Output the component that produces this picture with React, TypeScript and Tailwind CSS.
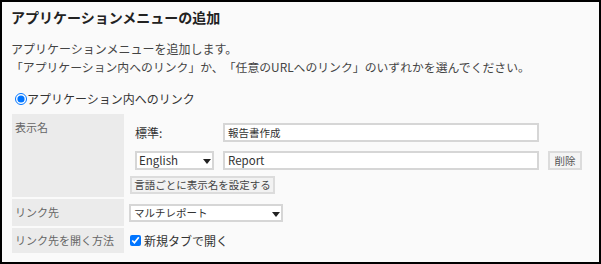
import React from "react";

const font = { fontFamily: '"Noto Sans CJK JP", "Noto Sans", sans-serif' };

function Arrow() {
  return (
    <svg width="8" height="5" viewBox="0 0 8 5" className="absolute">
      <path d="M0 0 H8 L4 5 Z" fill="#222" />
    </svg>
  );
}

export default function App() {
  return (
    <div
      className="w-[601px] h-[264px] box-border border-2 border-black bg-[#fafafa] pl-[9px] pt-[5px] text-[#333] [text-spacing-trim:space-all]"
      style={font}
    >
      <div className="text-[14px] font-bold leading-[20px] text-[#222]">アプリケーションメニューの追加</div>
      <div className="mt-[13px] text-[12px] leading-[18px] text-[#444]">
        <div>アプリケーションメニューを追加します。</div>
        <div className="text-[11.85px]">「アプリケーション内へのリンク」か、「任意のURLへのリンク」のいずれかを選んでください。</div>
      </div>
      <div className="mt-[14px] flex items-center text-[12px] leading-[18px] text-[#333]">
        <input type="radio" defaultChecked className="w-[12px] h-[12px] m-0 ml-[4px] mr-0" />
        <span>アプリケーション内へのリンク</span>
      </div>
      <div className="mt-[6px] ml-[1px] grid grid-cols-[112px_1fr] gap-[2px] w-[577px] text-[12px]">
        {/* Row 1 */}
        <div className="bg-[#ebebeb] pl-[3px] pt-[4px] leading-[18px] text-[11px] text-[#666]">表示名</div>
        <div className="pl-[4px] pt-[9px] pb-[3px]">
          <div className="pl-[5px] flex flex-col gap-[9px]">
            <div className="flex items-center gap-[9px]">
              <div className="w-[79px] text-[12px] text-[#333]">標準:</div>
              <div className="w-[316px] h-[19px] bg-white border-2 border-[#d6d6d6] box-border flex items-center pl-[3px] text-[10.5px] text-[#333]">
                報告書作成
              </div>
            </div>
            <div className="flex items-center gap-[9px]">
              <div className="relative w-[79px] h-[19px] bg-white border-2 border-[#d6d6d6] box-border flex items-center pl-[2px] text-[11.5px] text-[#333]">
                English
                <span className="absolute left-[66px] top-[6px] w-0 h-0">
                  <Arrow />
                </span>
              </div>
              <div className="w-[316px] h-[19px] bg-white border-2 border-[#d6d6d6] box-border flex items-center pl-[3px] text-[11.5px] text-[#333]">
                Report
              </div>
              <div className="w-[34px] h-[19px] bg-[#f4f4f4] border-2 border-[#dcdcdc] box-border flex items-center justify-center text-[10.5px] text-[#555]">
                削除
              </div>
            </div>
          </div>
          <div className="mt-[6px] w-[145px] h-[18px] bg-[#f2f2f2] border-2 border-[#dcdcdc] box-border flex items-center justify-center text-[10.5px] text-[#444]">
            言語ごとに表示名を設定する
          </div>
        </div>
        {/* Row 2 */}
        <div className="bg-[#ebebeb] pl-[3px] h-[27px] flex items-center text-[11px] text-[#666]">リンク先</div>
        <div className="pl-[3px] flex items-center">
          <div className="relative w-[154px] h-[18px] bg-white border-2 border-[#d6d6d6] box-border flex items-center pl-[3px] text-[10.5px] text-[#333]">
            マルチレポート
            <span className="absolute left-[141px] top-[6px] w-0 h-0">
              <Arrow />
            </span>
          </div>
        </div>
        {/* Row 3 */}
        <div className="bg-[#ebebeb] pl-[3px] h-[25px] flex items-center text-[11px] text-[#666]">リンク先を開く方法</div>
        <div className="pl-[4px] flex items-center text-[#333]">
          <input type="checkbox" defaultChecked className="w-[11px] h-[11px] m-0 mr-[3px]" />
          <span>新規タブで開く</span>
        </div>
      </div>
    </div>
  );
}
